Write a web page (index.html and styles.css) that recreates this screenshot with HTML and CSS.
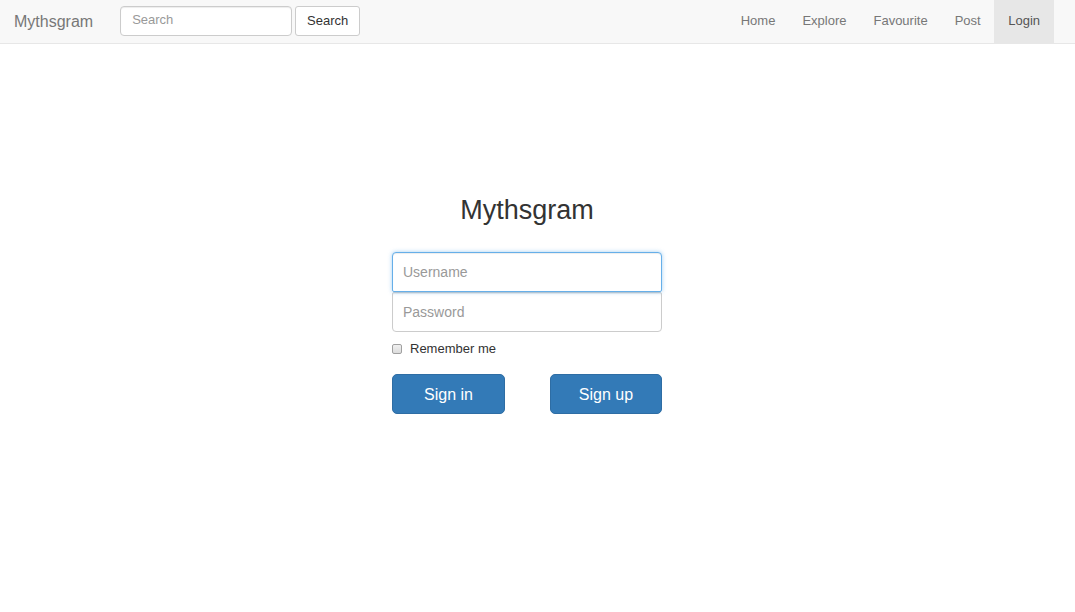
FILE: index.html
```html
<!DOCTYPE html>
<html>
<head>
<meta charset="utf-8">
<title>Mythsgram</title>
<link rel="stylesheet" href="styles.css">
</head>
<body>
<nav class="navbar">
  <a class="brand" href="#">Mythsgram</a>
  <form class="search">
    <input class="search-input" type="text" placeholder="Search">
    <button class="search-btn" type="button">Search</button>
  </form>
  <ul class="nav">
    <li><a href="#">Home</a></li>
    <li><a href="#">Explore</a></li>
    <li><a href="#">Favourite</a></li>
    <li><a href="#">Post</a></li>
    <li class="active"><a href="#">Login</a></li>
  </ul>
</nav>
<main class="main">
  <form class="signin">
    <h2 class="signin-title">Mythsgram</h2>
    <input class="field field-top focused" type="text" placeholder="Username">
    <input class="field field-bottom" type="password" placeholder="Password">
    <label class="remember"><input class="check" type="checkbox"><span>Remember me</span></label>
    <div class="actions">
      <button class="btn btn-in" type="button">Sign in</button>
      <button class="btn btn-up" type="button">Sign up</button>
    </div>
  </form>
</main>
</body>
</html>
```

FILE: styles.css
```css
* { box-sizing: border-box; }
html, body { margin: 0; padding: 0; background: #fff; }
body { font-family: "Liberation Sans", Arial, sans-serif; font-size: 14px; color: #333; }

.navbar {
  display: flex;
  align-items: center;
  height: 44px;
  background: #f8f8f8;
  border-bottom: 1px solid #e7e7e7;
  padding: 0 21px 0 14px;
}
.brand {
  font-size: 16px;
  color: #777;
  text-decoration: none;
  line-height: 43px;
}
.search {
  display: flex;
  align-items: center;
  gap: 3px;
  margin-left: 27px;
  margin-top: -2px;
}
.search-input {
  width: 172px;
  height: 30px;
  border: 1px solid #ccc;
  border-radius: 4px;
  padding: 0 11px 3px;
  font: 13px "Liberation Sans", Arial, sans-serif;
  color: #555;
  box-shadow: inset 0 1px 1px rgba(0,0,0,.075);
}
.search-input::placeholder { color: #999; }
.search-btn {
  height: 30px;
  width: 65px;
  border: 1px solid #ccc;
  border-radius: 3px;
  background: #fff;
  color: #333;
  font: 13px "Liberation Sans", Arial, sans-serif;
  padding: 0;
}
.nav {
  display: flex;
  list-style: none;
  margin: 0 0 0 auto;
  padding: 0;
  align-self: stretch;
}
.nav li { display: flex; }
.nav a {
  display: block;
  padding: 0 13.5px;
  line-height: 41px;
  font-size: 13px;
  color: #777;
  text-decoration: none;
}
.nav .active a { background: #e7e7e7; color: #555; padding: 0 14px; }

.main { display: flex; justify-content: center; padding: 151px 21px 0 0; }
.signin { width: 270px; display: flex; flex-direction: column; }
.signin-title {
  margin: 0 0 27px;
  font-size: 27px;
  font-weight: 400;
  line-height: 30px;
  text-align: center;
  color: #333;
}
.field {
  height: 40px;
  width: 270px;
  border: 1px solid #ccc;
  padding: 0 10px;
  font: 14px "Liberation Sans", Arial, sans-serif;
  color: #555;
  outline: none;
  box-shadow: inset 0 1px 1px rgba(0,0,0,.075);
}
.field::placeholder { color: #999; }
.field-top { border-radius: 4px 4px 2px 2px; }
.field-bottom { border-radius: 2px 2px 4px 4px; }
.focused {
  border-color: #66afe9;
  box-shadow: inset 0 1px 1px rgba(0,0,0,.075), 0 0 4px rgba(102,175,233,.6);
  position: relative;
  z-index: 1;
}
.remember {
  display: flex;
  align-items: center;
  margin-top: 10px;
  height: 12px;
  font-size: 13px;
  color: #333;
}
.check {
  appearance: none;
  -webkit-appearance: none;
  width: 10px;
  height: 10px;
  margin: 2px 8px 0 0;
  border: 1px solid #a0a0a0;
  border-radius: 2px;
  background: linear-gradient(#f0f0f0, #dcdcdc);
}
.actions {
  display: flex;
  justify-content: space-between;
  margin-top: 20px;
}
.btn {
  height: 40px;
  border: 1px solid #2e6da4;
  border-radius: 5px;
  background: #337ab7;
  color: #fff;
  font: 16px "Liberation Sans", Arial, sans-serif;
  padding: 0 0 0;
  line-height: 40px;
}
.btn-in { width: 113px; }
.btn-up { width: 112px; }
```
